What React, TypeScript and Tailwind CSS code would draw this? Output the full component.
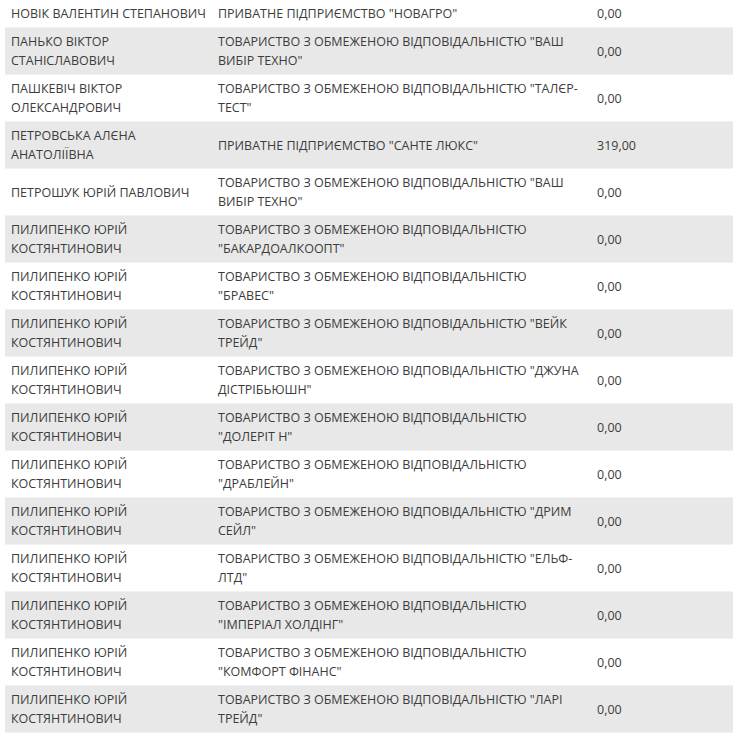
const rows: [string, string, string][] = [
  ['НОВІК ВАЛЕНТИН СТЕПАНОВИЧ', 'ПРИВАТНЕ ПІДПРИЄМСТВО "НОВАГРО"', '0,00'],
  ['ПАНЬКО ВІКТОР СТАНІСЛАВОВИЧ', 'ТОВАРИСТВО З ОБМЕЖЕНОЮ ВІДПОВІДАЛЬНІСТЮ "ВАШ ВИБІР ТЕХНО"', '0,00'],
  ['ПАШКЕВІЧ ВІКТОР ОЛЕКСАНДРОВИЧ', 'ТОВАРИСТВО З ОБМЕЖЕНОЮ ВІДПОВІДАЛЬНІСТЮ "ТАЛЄР-ТЕСТ"', '0,00'],
  ['ПЕТРОВСЬКА АЛЄНА АНАТОЛІЇВНА', 'ПРИВАТНЕ ПІДПРИЄМСТВО "САНТЕ ЛЮКС"', '319,00'],
  ['ПЕТРОШУК ЮРІЙ ПАВЛОВИЧ', 'ТОВАРИСТВО З ОБМЕЖЕНОЮ ВІДПОВІДАЛЬНІСТЮ "ВАШ ВИБІР ТЕХНО"', '0,00'],
  ['ПИЛИПЕНКО ЮРІЙ КОСТЯНТИНОВИЧ', 'ТОВАРИСТВО З ОБМЕЖЕНОЮ ВІДПОВІДАЛЬНІСТЮ "БАКАРДОАЛКООПТ"', '0,00'],
  ['ПИЛИПЕНКО ЮРІЙ КОСТЯНТИНОВИЧ', 'ТОВАРИСТВО З ОБМЕЖЕНОЮ ВІДПОВІДАЛЬНІСТЮ "БРАВЕС"', '0,00'],
  ['ПИЛИПЕНКО ЮРІЙ КОСТЯНТИНОВИЧ', 'ТОВАРИСТВО З ОБМЕЖЕНОЮ ВІДПОВІДАЛЬНІСТЮ "ВЕЙК ТРЕЙД"', '0,00'],
  ['ПИЛИПЕНКО ЮРІЙ КОСТЯНТИНОВИЧ', 'ТОВАРИСТВО З ОБМЕЖЕНОЮ ВІДПОВІДАЛЬНІСТЮ "ДЖУНА ДІСТРІБЬЮШН"', '0,00'],
  ['ПИЛИПЕНКО ЮРІЙ КОСТЯНТИНОВИЧ', 'ТОВАРИСТВО З ОБМЕЖЕНОЮ ВІДПОВІДАЛЬНІСТЮ "ДОЛЕРІТ Н"', '0,00'],
  ['ПИЛИПЕНКО ЮРІЙ КОСТЯНТИНОВИЧ', 'ТОВАРИСТВО З ОБМЕЖЕНОЮ ВІДПОВІДАЛЬНІСТЮ "ДРАБЛЕЙН"', '0,00'],
  ['ПИЛИПЕНКО ЮРІЙ КОСТЯНТИНОВИЧ', 'ТОВАРИСТВО З ОБМЕЖЕНОЮ ВІДПОВІДАЛЬНІСТЮ "ДРИМ СЕЙЛ"', '0,00'],
  ['ПИЛИПЕНКО ЮРІЙ КОСТЯНТИНОВИЧ', 'ТОВАРИСТВО З ОБМЕЖЕНОЮ ВІДПОВІДАЛЬНІСТЮ "ЕЛЬФ-ЛТД"', '0,00'],
  ['ПИЛИПЕНКО ЮРІЙ КОСТЯНТИНОВИЧ', 'ТОВАРИСТВО З ОБМЕЖЕНОЮ ВІДПОВІДАЛЬНІСТЮ "ІМПЕРІАЛ ХОЛДІНГ"', '0,00'],
  ['ПИЛИПЕНКО ЮРІЙ КОСТЯНТИНОВИЧ', 'ТОВАРИСТВО З ОБМЕЖЕНОЮ ВІДПОВІДАЛЬНІСТЮ "КОМФОРТ ФІНАНС"', '0,00'],
  ['ПИЛИПЕНКО ЮРІЙ КОСТЯНТИНОВИЧ', 'ТОВАРИСТВО З ОБМЕЖЕНОЮ ВІДПОВІДАЛЬНІСТЮ "ЛАРІ ТРЕЙД"', '0,00'],
];

export default function App() {
  return (
    <div className="min-h-[740px] bg-white pl-[5px] font-['Open_Sans',sans-serif] text-[12.5px] leading-[19px] text-[#3c3c3c]">
      <div className="w-[728px]">
        {rows.map(([name, company, amount], i) => (
          <div
            key={i}
            className={`grid grid-cols-[207px_379px_142px] items-center border-b border-[#f2f2f2] py-[4px] ${
              i % 2 === 1 ? 'bg-[#e8e8e8]' : 'bg-white'
            }`}
          >
            <div className="pl-[6px] pr-[2px]">{name}</div>
            <div className="pl-[6px] pr-[6px]">{company}</div>
            <div className="pl-[6px]">{amount}</div>
          </div>
        ))}
      </div>
    </div>
  );
}
